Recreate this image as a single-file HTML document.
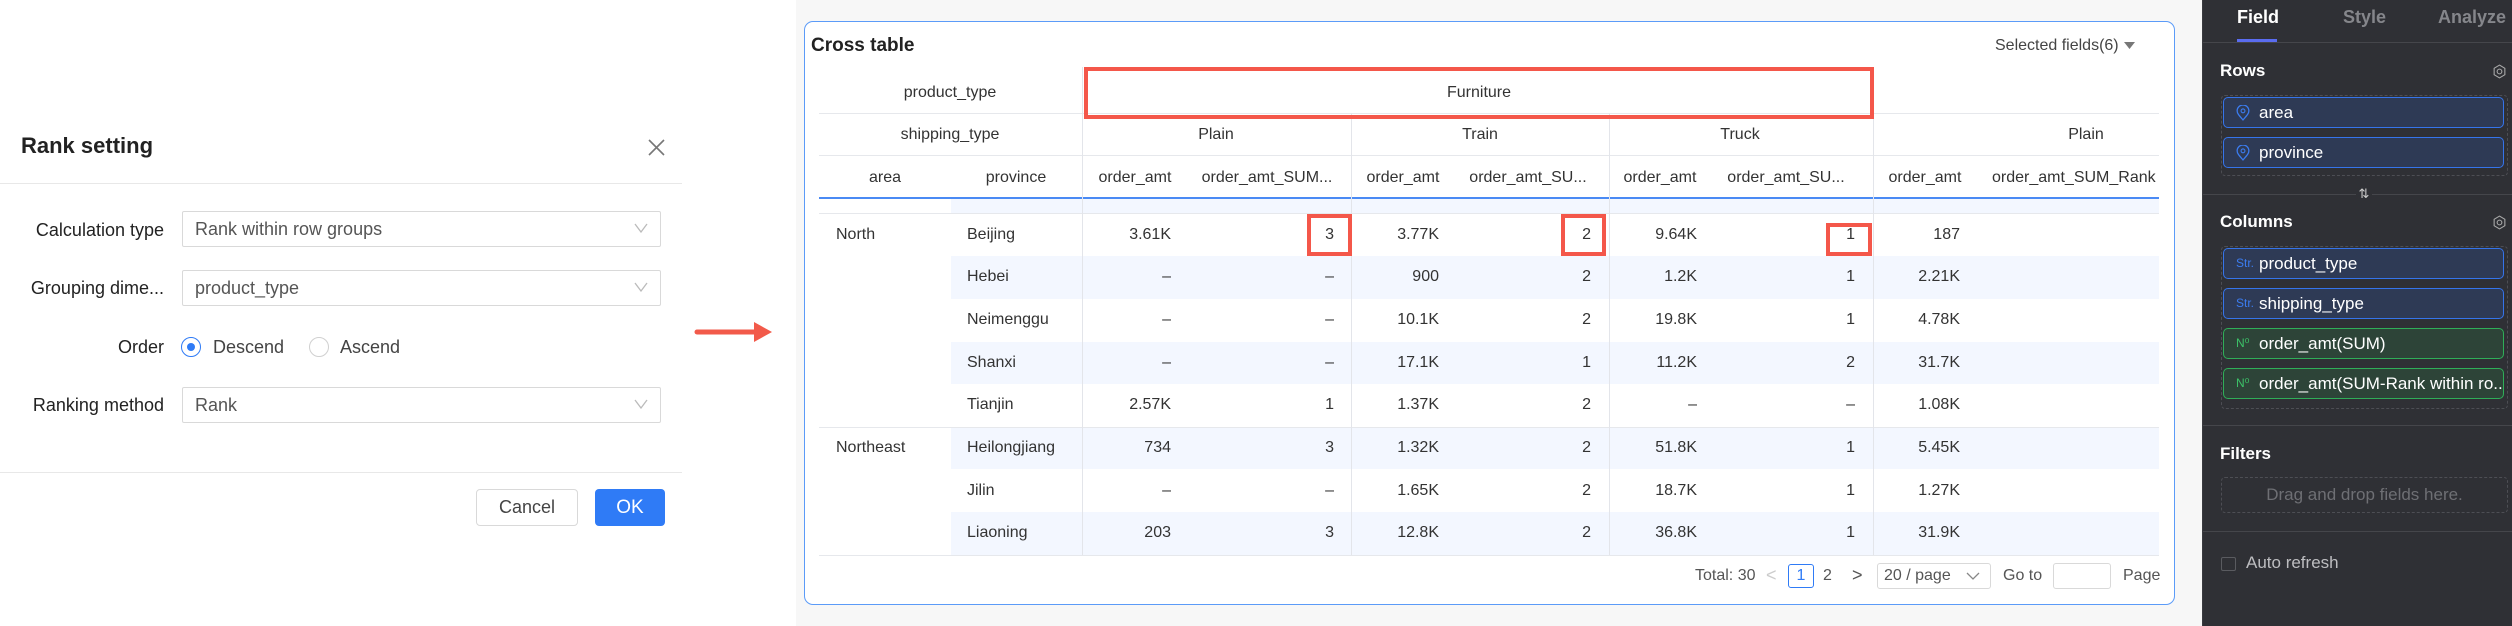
<!DOCTYPE html>
<html><head><meta charset="utf-8"><style>
*{margin:0;padding:0;box-sizing:border-box}
body{width:2512px;height:626px;overflow:hidden;position:relative;background:#f7f7f7;font-family:"Liberation Sans",Arial,sans-serif;color:#222}
.a{position:absolute;white-space:nowrap}
.t{position:absolute;white-space:nowrap;line-height:20px;height:20px}
.r{text-align:right;width:200px}
.c{text-align:center;width:300px}
.sel{position:absolute;left:182px;width:479px;height:36px;border:1px solid #d9d9d9;border-radius:2px;background:#fff;font-size:18px;color:#555;line-height:34px;padding-left:12px}
.sel svg{position:absolute;right:12px;top:11px}
.lbl{position:absolute;width:164px;text-align:right;font-size:18px;color:#222;line-height:20px}
.hl{position:absolute;height:1px;background:#e6e8ec}
.vl{position:absolute;width:1px;background:#e3e5ea}
.box{position:absolute;border:4px solid #f4574a}
.pill{position:absolute;left:2223px;width:281px;height:31px;border:1px solid #3574ea;background:#2e3a55;border-radius:5px;color:#fff;font-size:17px;line-height:29px;padding-left:35px;white-space:nowrap;overflow:hidden}
.pill.g{border-color:#2fae58;background:#2d4438}
.pill .ic{position:absolute;left:12px;top:0;font-size:12px;color:#3b7cf0}
.pill.g .ic{color:#3cc268}
.sec{position:absolute;left:2220px;color:#fff;font-size:17px;font-weight:bold;line-height:20px}
.div{position:absolute;left:2203px;width:309px;height:1px;background:#45464b}
.dash{position:absolute;left:2221px;width:287px;border:1px dashed #4d4e54;border-radius:4px}
.th{font-size:16px;color:#333}
.td{font-size:16px;color:#333}
</style></head><body>
<div class="a" style="left:0;top:0;width:796px;height:626px;background:#fff"></div>
<div class="a" style="left:21px;top:132px;font-size:22px;font-weight:bold;color:#222;line-height:28px">Rank setting</div>
<svg class="a" style="left:648px;top:139px" width="17" height="17" viewBox="0 0 17 17"><path d="M1 1L16 16M16 1L1 16" stroke="#777" stroke-width="1.6"/></svg>
<div class="a" style="left:0;top:183px;width:682px;height:1px;background:#e8e8e8"></div>

<div class="lbl" style="top:220px">Calculation type</div>
<div class="sel" style="top:211px">Rank within row groups<svg width="14" height="10"><path d="M1 1L7 9L13 1" stroke="#bbb" fill="none" stroke-width="1.3"/></svg></div>
<div class="lbl" style="top:278px">Grouping dime...</div>
<div class="sel" style="top:270px">product_type<svg width="14" height="10"><path d="M1 1L7 9L13 1" stroke="#bbb" fill="none" stroke-width="1.3"/></svg></div>
<div class="lbl" style="top:337px">Order</div>
<div class="a" style="left:181px;top:337px;width:20px;height:20px;border:1.5px solid #2f7bf6;border-radius:50%"></div>
<div class="a" style="left:187px;top:343px;width:8px;height:8px;background:#2f7bf6;border-radius:50%"></div>
<div class="t" style="left:213px;top:337px;font-size:18px;color:#444">Descend</div>
<div class="a" style="left:309px;top:337px;width:20px;height:20px;border:1px solid #d0d0d0;border-radius:50%"></div>
<div class="t" style="left:340px;top:337px;font-size:18px;color:#444">Ascend</div>
<div class="lbl" style="top:395px">Ranking method</div>
<div class="sel" style="top:387px">Rank<svg width="14" height="10"><path d="M1 1L7 9L13 1" stroke="#bbb" fill="none" stroke-width="1.3"/></svg></div>
<div class="a" style="left:0;top:472px;width:682px;height:1px;background:#e8e8e8"></div>
<div class="a" style="left:476px;top:489px;width:102px;height:37px;border:1px solid #d9d9d9;border-radius:4px;background:#fff;text-align:center;line-height:35px;font-size:18px;color:#444">Cancel</div>
<div class="a" style="left:595px;top:489px;width:70px;height:37px;border-radius:4px;background:#2f7bf6;text-align:center;line-height:37px;font-size:19px;color:#fff">OK</div>
<svg class="a" style="left:694px;top:320px" width="80" height="24" viewBox="0 0 80 24"><path d="M3 12H64" stroke="#f25a4a" stroke-width="5" stroke-linecap="round"/><path d="M60 2L78 12L60 22Z" fill="#f25a4a"/></svg>

<div class="a" style="left:804px;top:21px;width:1371px;height:584px;background:#fff;border:1.5px solid #5b9bf8;border-radius:9px"></div>
<div class="t" style="left:811px;top:35px;font-size:19px;font-weight:bold;color:#222;line-height:22px">Cross table</div>
<div class="t" style="left:1995px;top:36px;font-size:16px;color:#444">Selected fields(6)</div>
<svg class="a" style="left:2124px;top:42px" width="11" height="7"><path d="M0 0H11L5.5 7Z" fill="#777"/></svg>

<div class="a" style="left:819px;top:60px;width:1340px;height:500px;overflow:hidden">
<div style="position:absolute;left:-819px;top:-60px;width:2512px;height:626px">
<div class="a" style="left:951px;top:199px;width:1300px;height:14px;background:#f3f7ff"></div>
<div class="a" style="left:951px;top:256px;width:1300px;height:43px;background:#f3f7ff"></div>
<div class="a" style="left:951px;top:342px;width:1300px;height:42px;background:#f3f7ff"></div>
<div class="a" style="left:951px;top:427px;width:1300px;height:42px;background:#f3f7ff"></div>
<div class="a" style="left:951px;top:512px;width:1300px;height:43px;background:#f3f7ff"></div>
<div class="hl" style="left:819px;top:113px;width:1340px"></div>
<div class="hl" style="left:819px;top:155px;width:1340px"></div>
<div class="a" style="left:819px;top:197px;width:1340px;height:2px;background:#4a8af4"></div>
<div class="hl" style="left:819px;top:213px;width:1340px"></div>
<div class="hl" style="left:819px;top:427px;width:1340px"></div>
<div class="hl" style="left:819px;top:555px;width:1340px"></div>
<div class="vl" style="left:1082px;top:67px;height:488px"></div>
<div class="vl" style="left:1351px;top:113px;height:442px"></div>
<div class="vl" style="left:1609px;top:113px;height:442px"></div>
<div class="vl" style="left:1873px;top:113px;height:442px"></div>
<div class="t c th" style="left:800px;top:83px">product_type</div>
<div class="t c th" style="left:800px;top:125px">shipping_type</div>
<div class="t c th" style="left:1329px;top:83px">Furniture</div>
<div class="t c th" style="left:1066px;top:125px">Plain</div>
<div class="t c th" style="left:1330px;top:125px">Train</div>
<div class="t c th" style="left:1590px;top:125px">Truck</div>
<div class="t c th" style="left:1936px;top:125px">Plain</div>
<div class="t c th" style="left:735px;top:168px">area</div>
<div class="t c th" style="left:866px;top:168px">province</div>
<div class="t c th" style="left:985px;top:168px">order_amt</div>
<div class="t c th" style="left:1117px;top:168px">order_amt_SUM...</div>
<div class="t c th" style="left:1253px;top:168px">order_amt</div>
<div class="t c th" style="left:1378px;top:168px">order_amt_SU...</div>
<div class="t c th" style="left:1510px;top:168px">order_amt</div>
<div class="t c th" style="left:1636px;top:168px">order_amt_SU...</div>
<div class="t c th" style="left:1775px;top:168px">order_amt</div>
<div class="t th" style="left:1992px;top:168px">order_amt_SUM_Rank within</div>
<div class="t td" style="left:836px;top:225px">North</div>
<div class="t td" style="left:836px;top:438px">Northeast</div>
<div class="t td" style="left:967px;top:225px">Beijing</div>
<div class="t td" style="left:967px;top:267px">Hebei</div>
<div class="t td" style="left:967px;top:310px">Neimenggu</div>
<div class="t td" style="left:967px;top:353px">Shanxi</div>
<div class="t td" style="left:967px;top:395px">Tianjin</div>
<div class="t td" style="left:967px;top:438px">Heilongjiang</div>
<div class="t td" style="left:967px;top:481px">Jilin</div>
<div class="t td" style="left:967px;top:523px">Liaoning</div>
<div class="t r td" style="left:971px;top:225px">3.61K</div><div class="t r td" style="left:1134px;top:225px">3</div><div class="t r td" style="left:1239px;top:225px">3.77K</div><div class="t r td" style="left:1391px;top:225px">2</div><div class="t r td" style="left:1497px;top:225px">9.64K</div><div class="t r td" style="left:1655px;top:225px">1</div><div class="t r td" style="left:1760px;top:225px">187</div>
<div class="t r td" style="left:971px;top:267px">–</div><div class="t r td" style="left:1134px;top:267px">–</div><div class="t r td" style="left:1239px;top:267px">900</div><div class="t r td" style="left:1391px;top:267px">2</div><div class="t r td" style="left:1497px;top:267px">1.2K</div><div class="t r td" style="left:1655px;top:267px">1</div><div class="t r td" style="left:1760px;top:267px">2.21K</div>
<div class="t r td" style="left:971px;top:310px">–</div><div class="t r td" style="left:1134px;top:310px">–</div><div class="t r td" style="left:1239px;top:310px">10.1K</div><div class="t r td" style="left:1391px;top:310px">2</div><div class="t r td" style="left:1497px;top:310px">19.8K</div><div class="t r td" style="left:1655px;top:310px">1</div><div class="t r td" style="left:1760px;top:310px">4.78K</div>
<div class="t r td" style="left:971px;top:353px">–</div><div class="t r td" style="left:1134px;top:353px">–</div><div class="t r td" style="left:1239px;top:353px">17.1K</div><div class="t r td" style="left:1391px;top:353px">1</div><div class="t r td" style="left:1497px;top:353px">11.2K</div><div class="t r td" style="left:1655px;top:353px">2</div><div class="t r td" style="left:1760px;top:353px">31.7K</div>
<div class="t r td" style="left:971px;top:395px">2.57K</div><div class="t r td" style="left:1134px;top:395px">1</div><div class="t r td" style="left:1239px;top:395px">1.37K</div><div class="t r td" style="left:1391px;top:395px">2</div><div class="t r td" style="left:1497px;top:395px">–</div><div class="t r td" style="left:1655px;top:395px">–</div><div class="t r td" style="left:1760px;top:395px">1.08K</div>
<div class="t r td" style="left:971px;top:438px">734</div><div class="t r td" style="left:1134px;top:438px">3</div><div class="t r td" style="left:1239px;top:438px">1.32K</div><div class="t r td" style="left:1391px;top:438px">2</div><div class="t r td" style="left:1497px;top:438px">51.8K</div><div class="t r td" style="left:1655px;top:438px">1</div><div class="t r td" style="left:1760px;top:438px">5.45K</div>
<div class="t r td" style="left:971px;top:481px">–</div><div class="t r td" style="left:1134px;top:481px">–</div><div class="t r td" style="left:1239px;top:481px">1.65K</div><div class="t r td" style="left:1391px;top:481px">2</div><div class="t r td" style="left:1497px;top:481px">18.7K</div><div class="t r td" style="left:1655px;top:481px">1</div><div class="t r td" style="left:1760px;top:481px">1.27K</div>
<div class="t r td" style="left:971px;top:523px">203</div><div class="t r td" style="left:1134px;top:523px">3</div><div class="t r td" style="left:1239px;top:523px">12.8K</div><div class="t r td" style="left:1391px;top:523px">2</div><div class="t r td" style="left:1497px;top:523px">36.8K</div><div class="t r td" style="left:1655px;top:523px">1</div><div class="t r td" style="left:1760px;top:523px">31.9K</div>
</div></div>
<div class="box" style="left:1084px;top:67px;width:790px;height:52px"></div>
<div class="box" style="left:1307px;top:214px;width:45px;height:42px"></div>
<div class="box" style="left:1561px;top:214px;width:45px;height:42px"></div>
<div class="box" style="left:1826px;top:223px;width:46px;height:33px"></div>
<div class="t" style="left:1695px;top:566px;font-size:16px;color:#555">Total: 30</div>
<div class="t" style="left:1766px;top:565px;font-size:18px;color:#ccc">&lt;</div>
<div class="a" style="left:1788px;top:564px;width:26px;height:24px;border:1px solid #2f7bf6;border-radius:3px;color:#2f7bf6;font-size:16px;text-align:center;line-height:22px">1</div>
<div class="t" style="left:1823px;top:566px;font-size:16px;color:#555">2</div>
<div class="t" style="left:1852px;top:565px;font-size:18px;color:#555">&gt;</div>
<div class="a" style="left:1877px;top:563px;width:114px;height:26px;border:1px solid #d9d9d9;border-radius:3px;font-size:16px;color:#555;line-height:24px;padding-left:6px">20 / page</div>
<svg class="a" style="left:1966px;top:572px" width="14" height="9"><path d="M1 1L7 7L13 1" stroke="#888" fill="none" stroke-width="1.3"/></svg>
<div class="t" style="left:2003px;top:566px;font-size:16px;color:#555">Go to</div>
<div class="a" style="left:2053px;top:563px;width:58px;height:26px;border:1px solid #d9d9d9;border-radius:3px"></div>
<div class="t" style="left:2123px;top:566px;font-size:16px;color:#555">Page</div>

<div class="a" style="left:2202px;top:0;width:310px;height:626px;background:#2f3035;border-left:1px solid #3a3b40"></div>
<div class="t" style="left:2237px;top:6px;font-size:18px;font-weight:bold;color:#fff;line-height:22px;height:22px">Field</div>
<div class="t" style="left:2343px;top:6px;font-size:18px;font-weight:bold;color:#85868b;line-height:22px;height:22px">Style</div>
<div class="t" style="left:2438px;top:6px;font-size:18px;font-weight:bold;color:#85868b;line-height:22px;height:22px">Analyze</div>
<div class="a" style="left:2237px;top:39px;width:40px;height:3px;background:#5a6cf0"></div>
<div class="div" style="top:42px"></div>
<div class="sec" style="top:61px">Rows</div>
<svg class="a" style="left:2492px;top:64px" width="15" height="15" viewBox="0 0 14 14"><circle cx="7" cy="7" r="2.2" stroke="#aaa" fill="none"/><path d="M7 1L12 4V10L7 13L2 10V4Z" stroke="#aaa" fill="none"/></svg>
<div class="dash" style="top:95px;height:81px"></div>
<div class="pill" style="top:97px"><svg class="ic" style="top:7px" width="14" height="16" viewBox="0 0 13 15"><path d="M6.5 14C3 10 1 8 1 5.5A5.5 5.5 0 0 1 12 5.5C12 8 10 10 6.5 14Z" stroke="#3b7cf0" fill="none" stroke-width="1.2"/><circle cx="6.5" cy="5.5" r="1.8" stroke="#3b7cf0" fill="none"/></svg>area</div>
<div class="pill" style="top:137px"><svg class="ic" style="top:7px" width="14" height="16" viewBox="0 0 13 15"><path d="M6.5 14C3 10 1 8 1 5.5A5.5 5.5 0 0 1 12 5.5C12 8 10 10 6.5 14Z" stroke="#3b7cf0" fill="none" stroke-width="1.2"/><circle cx="6.5" cy="5.5" r="1.8" stroke="#3b7cf0" fill="none"/></svg>province</div>
<div class="div" style="top:194px"></div>
<div class="a" style="left:2356px;top:186px;width:16px;height:16px;background:#2f3035;color:#ccc;font-size:13px;text-align:center;line-height:16px">⇅</div>
<div class="sec" style="top:212px">Columns</div>
<svg class="a" style="left:2492px;top:215px" width="15" height="15" viewBox="0 0 14 14"><circle cx="7" cy="7" r="2.2" stroke="#aaa" fill="none"/><path d="M7 1L12 4V10L7 13L2 10V4Z" stroke="#aaa" fill="none"/></svg>
<div class="dash" style="top:246px;height:163px"></div>
<div class="pill" style="top:248px"><span class="ic" style="left:12px">Str.</span>product_type</div>
<div class="pill" style="top:288px"><span class="ic" style="left:12px">Str.</span>shipping_type</div>
<div class="pill g" style="top:328px"><span class="ic" style="left:12px">N⁰</span>order_amt(SUM)</div>
<div class="pill g" style="top:368px"><span class="ic" style="left:12px">N⁰</span>order_amt(SUM-Rank within ro...</div>
<div class="div" style="top:425px"></div>
<div class="sec" style="top:444px">Filters</div>
<div class="dash" style="top:477px;height:36px;text-align:center;color:#6e6f74;font-size:17px;line-height:34px">Drag and drop fields here.</div>
<div class="div" style="top:531px"></div>
<div class="a" style="left:2221px;top:557px;width:15px;height:14px;border:1px solid #5a5b60;border-radius:2px"></div>
<div class="t" style="left:2246px;top:553px;font-size:17px;color:#bdbdc0">Auto refresh</div>
</body></html>
